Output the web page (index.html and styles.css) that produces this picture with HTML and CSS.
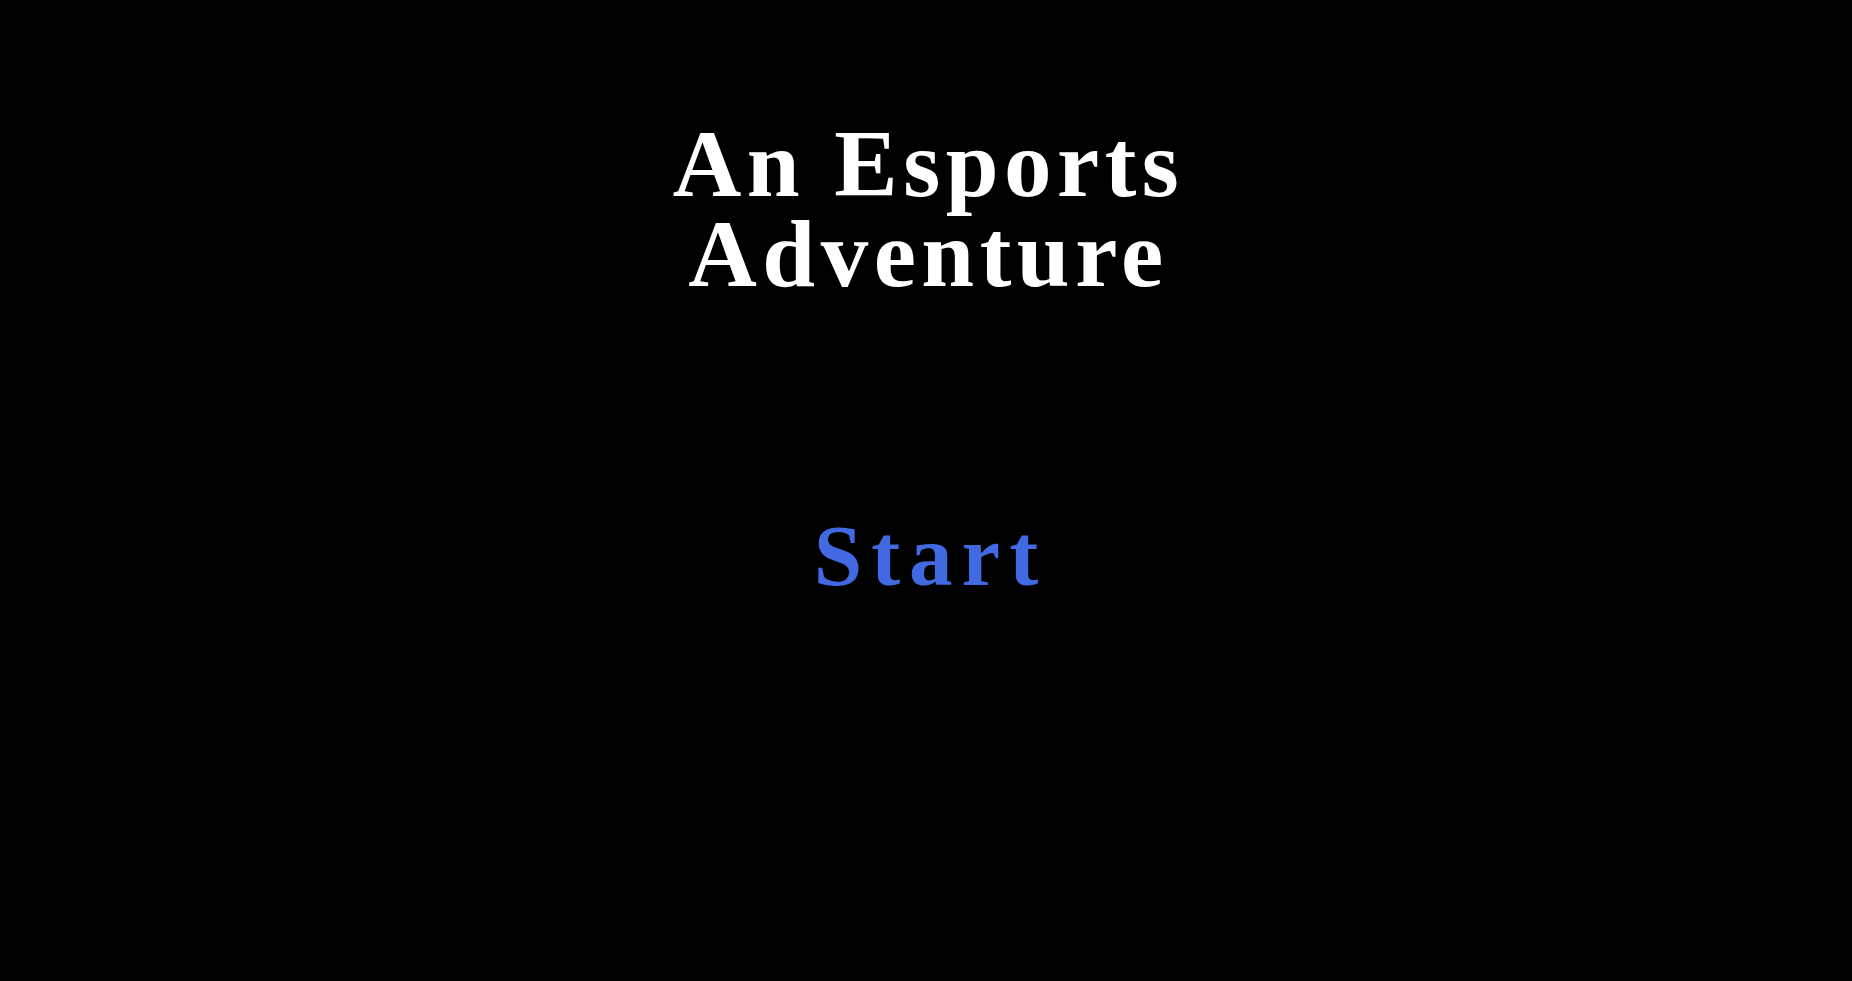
FILE: index.html
```html
<!DOCTYPE html>
<html>
<head>
<meta charset="utf-8">
<title>An Esports Adventure</title>
<link rel="stylesheet" href="styles.css">
</head>
<body>
<main class="screen">
  <h1 class="title">An Esports<br>Adventure</h1>
  <a class="start" href="#">Start</a>
</main>
</body>
</html>
```
FILE: styles.css
```css
html, body {
  margin: 0;
  padding: 0;
  background: #000;
  height: 100%;
}
.screen {
  display: flex;
  flex-direction: column;
  align-items: center;
  font-family: "Liberation Serif", "Times New Roman", serif;
  font-weight: bold;
}
.title {
  margin: 119px 0 0;
  padding-left: 5px;
  font-size: 95px;
  line-height: 90px;
  color: #fff;
  text-align: center;
  letter-spacing: 5.5px;
}
.start {
  margin-top: 212px;
  padding-left: 9px;
  font-size: 87px;
  line-height: 90px;
  color: #4169e1;
  text-decoration: none;
  letter-spacing: 9px;
}
```
